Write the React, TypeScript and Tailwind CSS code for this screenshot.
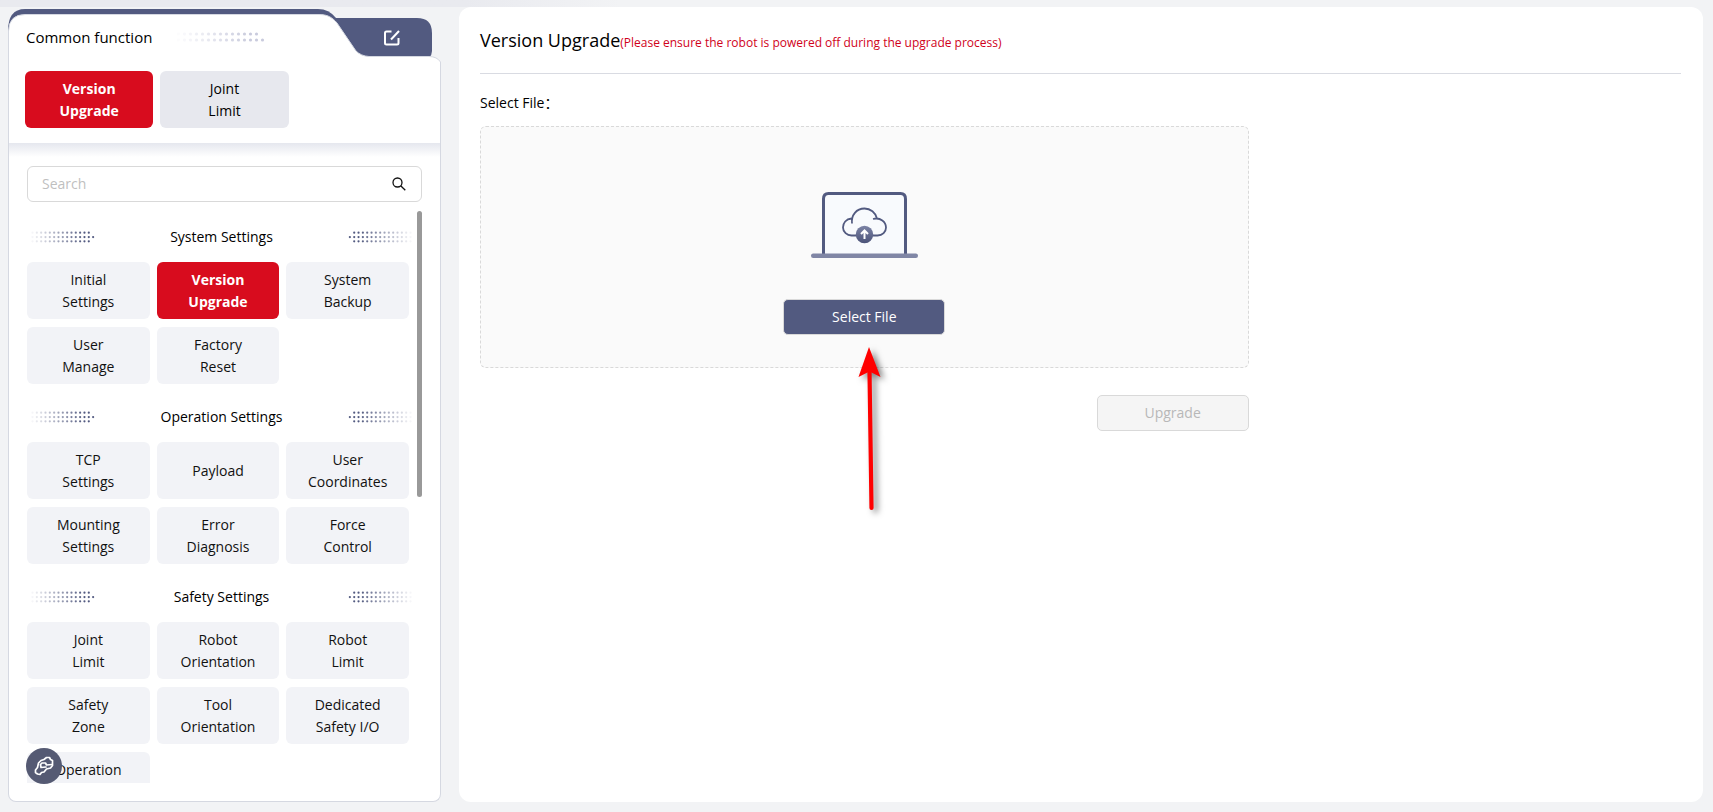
import React, { useState } from 'react';
import clsx from 'clsx';

type Section = {
  title: string;
  items: string[][];
};

const commonItems = [['Version', 'Upgrade'], ['Joint', 'Limit']];

const sections: Section[] = [
  {
    title: 'System Settings',
    items: [['Initial', 'Settings'], ['Version', 'Upgrade'], ['System', 'Backup'], ['User', 'Manage'], ['Factory', 'Reset']],
  },
  {
    title: 'Operation Settings',
    items: [['TCP', 'Settings'], ['Payload'], ['User', 'Coordinates'], ['Mounting', 'Settings'], ['Error', 'Diagnosis'], ['Force', 'Control']],
  },
  {
    title: 'Safety Settings',
    items: [
      ['Joint', 'Limit'],
      ['Robot', 'Orientation'],
      ['Robot', 'Limit'],
      ['Safety', 'Zone'],
      ['Tool', 'Orientation'],
      ['Dedicated', 'Safety I/O'],
      ['Operation', 'Mode'],
    ],
  },
];

const SectionDots = ({ flip = false }: { flip?: boolean }) => (
  <svg width="64" height="14" viewBox="0 0 64 14" className={flip ? '-scale-x-100' : ''} aria-hidden="true">
    {[0, 1, 2].map((row) =>
      Array.from({ length: row === 1 ? 15 : 14 }, (_, i) => (
        <circle key={`${row}-${i}`} cx={1.5 + i * 4.33} cy={2.7 + row * 4.33} r="1.1" fill="#525a80" opacity={Math.min(1, 0.06 + i * 0.08)} />
      ))
    )}
  </svg>
);

const HeaderDots = () => (
  <svg width="90" height="12" viewBox="0 0 90 12" aria-hidden="true">
    {[0, 1].map((row) =>
      Array.from({ length: 14 + row }, (_, i) => (
        <circle key={`${row}-${i}`} cx={2.5 + i * 6} cy={3 + row * 6} r="1.6" fill="#c9cbdd" opacity={Math.min(1, 0.05 + i * 0.08)} />
      ))
    )}
  </svg>
);

/* Folder-like header: dark tab behind, white tab in front */
const TabShape = () => (
  <svg className="absolute inset-0" width="433" height="53" viewBox="0 0 433 53" fill="none" aria-hidden="true">
    <path d="M320 9H409Q424 9 424 24V42Q424 46 421 49H340L310 20Z" fill="#525a80" />
    <path d="M0 22Q0 0 17 0H310Q321 0 328 9L340 25H0Z" fill="#525a80" />
    <path
      d="M0.5 53V22Q1 5.5 17 5.5H311C319 5.5 324 8 329 14L348 42Q353 47 361 47.5H421Q429 47.5 432.5 53Z"
      fill="#fff"
    />
    <path
      d="M0.5 53V22Q1 5.5 17 5.5H311C319 5.5 324 8 329 14L348 42Q353 47 361 47.5H421Q429 47.5 432.5 53"
      stroke="#d5d8e1"
    />
  </svg>
);

const FunctionButton = ({ lines, active, tone, onClick }: { lines: string[]; active: boolean; tone: string; onClick: () => void }) => (
  <button
    onClick={onClick}
    className={clsx(
      'flex h-[57px] w-full flex-col items-center justify-center rounded-md text-sm leading-[22px]',
      active ? 'bg-[#d80c1e] font-bold text-white' : tone
    )}
  >
    {lines.map((line) => (
      <span key={line}>{line}</span>
    ))}
  </button>
);

const Sidebar = () => {
  const [current, setCurrent] = useState('Version Upgrade');

  return (
    <aside className="relative mt-0.5 flex w-[433px] shrink-0 flex-col">
      <div className="relative flex h-[53px] shrink-0 items-start">
        <TabShape />
        <h2 className="relative pt-4 pl-[18px] text-[15px] leading-6 font-normal">Common function</h2>
        <div className="relative pt-[22px] pl-6">
          <HeaderDots />
        </div>
        <button aria-label="Edit common functions" className="relative mt-5 mr-10 ml-auto text-white">
          <svg width="18" height="18" viewBox="0 0 18 18" fill="none" stroke="currentColor" strokeWidth="2" aria-hidden="true">
            <path d="M8.5 2.500H3.5Q2 2.500 2 4V14Q2 15.500 3.500 15.500H14Q15.500 15.500 15.500 14V9" />
            <path d="M8 10.500L16 2" />
          </svg>
        </button>
      </div>

      <div className="grid shrink-0 grid-cols-3 gap-[7px] border-x border-[#d5d8e1] bg-white px-4 pt-[9px] pb-[15px]">
        {commonItems.map((lines) => (
          <FunctionButton
            key={lines.join(' ')}
            lines={lines}
            active={current === lines.join(' ')}
            tone="bg-[#e7e8ee] text-black font-medium"
            onClick={() => setCurrent(lines.join(' '))}
          />
        ))}
      </div>

      <div className="flex min-h-0 flex-1 flex-col rounded-b-lg border-x border-b border-[#d5d8e1] bg-white pb-[18px]">
        <div className="h-[14px] shrink-0 bg-linear-to-b from-[#e5e7ee] to-white" />
        <div className="mx-[18px] mt-[9px] flex h-9 shrink-0 items-center rounded-md border border-[#d9d9d9] pr-[15px] pl-[14px]">
          <input
            type="text"
            aria-label="Search functions"
            placeholder="Search"
            className="min-w-0 flex-1 text-sm outline-none placeholder:text-[#bfbfbf]"
          />
          <button aria-label="Search">
            <svg width="14" height="14" viewBox="0 0 14 14" fill="none" stroke="#111" strokeWidth="1.3" aria-hidden="true">
              <circle cx="5.500" cy="5.500" r="4.500" />
              <path d="M8.700 8.700L13.300 13.300" />
            </svg>
          </button>
        </div>

        <div className="mx-[18px] mt-[9px] flex min-h-0 flex-1 justify-between">
          <div className="w-[385px] overflow-x-hidden overflow-y-auto [scrollbar-width:none]">
            {sections.map((section) => (
              <section key={section.title} className="mb-[7px]">
                <div className="flex h-[51px] items-center justify-between pl-1">
                  <SectionDots />
                  <h3 className="text-sm font-normal">{section.title}</h3>
                  <SectionDots flip />
                </div>
                <div className="mr-[3px] grid grid-cols-3 gap-x-[7px] gap-y-2">
                  {section.items.map((lines) => (
                    <FunctionButton
                      key={lines.join(' ')}
                      lines={lines}
                      active={current === lines.join(' ')}
                      tone="bg-[#f2f3f7] text-[#111]"
                      onClick={() => setCurrent(lines.join(' '))}
                    />
                  ))}
                </div>
              </section>
            ))}
          </div>
          <div className="h-1/2 w-[5px] rounded-full bg-[#999]" />
        </div>
      </div>

      <button
        aria-label="Robot"
        className="absolute bottom-[18px] left-[18px] flex size-9 items-center justify-center rounded-full bg-[#555a73] text-white"
      >
        <svg width="20" height="20" viewBox="0 0 20 20" fill="none" stroke="currentColor" strokeWidth="1.700" strokeLinejoin="round" strokeLinecap="round" aria-hidden="true">
          <path d="M1.500 14L3.500 11.500L4.500 7L7 4.500L10 3.500L12.500 1.500H15.500L16.500 3.500L18.500 4.500V9.500L16.500 12L12.500 13L10 16L7.500 16.500L6 18.500L3.500 18L1.500 16.500Z" />
          <path d="M18 8.500L12.500 9L11.500 7H8L6.500 8.500L7 11.500L12 11" />
        </svg>
      </button>
    </aside>
  );
};

const LaptopUpload = () => (
  <svg width="108" height="68" viewBox="0 0 108 68" fill="none" aria-hidden="true">
    <defs>
      <linearGradient id="badge" x1="0" y1="0" x2="0" y2="1">
        <stop offset="0" stopColor="#7c83a5" />
        <stop offset="1" stopColor="#4b5379" />
      </linearGradient>
    </defs>
    <path d="M13.500 63V7Q13.500 1.500 18.500 1.500H90.500Q95.500 1.500 95.500 7V63" fill="#f8fafd" stroke="#525a80" strokeWidth="3" />
    <rect x="1" y="61.500" width="107" height="4.500" rx="2.200" fill="#8086a5" />
    <path
      d="M42 31.500C41 23 46.500 16.500 54.500 16.500C60.500 16.500 65.500 20.500 67 26.500M41.500 26.500C36 27 33 31 33 35.500C33 40 37 43.500 41.500 43.500H67.500C72.500 43.500 76 40 76 35.500C76 30 70.500 25 63 27"
      stroke="#525a80"
      strokeWidth="1.800"
    />
    <circle cx="54.500" cy="42.500" r="8.700" fill="url(#badge)" />
    <path d="M54.500 47V39M51 42L54.500 38.500L58 42" stroke="#fff" strokeWidth="2" />
  </svg>
);

const PointerArrow = () => (
  <svg
    className="pointer-events-none absolute top-full left-1/2 mt-2 -ml-2 drop-shadow-[4px_3px_3px_rgba(0,0,0,0.5)]"
    width="36"
    height="170"
    viewBox="0 0 36 170"
    aria-hidden="true"
  >
    <path d="M13.500 28L15.500 165" stroke="#f00" strokeWidth="4.200" strokeLinecap="round" />
    <path d="M13 4L24.500 34L13.500 28.500L2.500 34Z" fill="#f00" />
  </svg>
);

const UpgradePanel = () => (
  <main className="min-w-0 flex-1 rounded-xl bg-white pr-[22px] pl-[21px]">
    <header className="flex h-[67px] items-center border-b border-[#d9dbe2] pb-px">
      <div className="flex items-baseline">
        <h1 className="text-lg font-normal">Version Upgrade</h1>
        <span className="text-xs text-[#d0021b]">(Please ensure the robot is powered off during the upgrade process)</span>
      </div>
    </header>

    <p className="mt-[18px] text-sm leading-[22px]">Select File：</p>

    <div className="mt-3 w-[64%]">
      <div className="flex h-[242px] flex-col items-center rounded-md border border-dashed border-[#d9d9d9] bg-[#fafafa] pt-[65px]">
        <LaptopUpload />
        <div className="relative mt-[39px]">
          <button className="h-9 w-[162px] rounded-[5px] border border-[#d9d9d9] bg-[#525a80] text-sm text-white">Select File</button>
          <PointerArrow />
        </div>
      </div>
      <div className="mt-[27px] flex justify-end">
        <button disabled className="h-9 w-[152px] rounded-[5px] border border-[#d9d9d9] bg-[#f5f5f5] text-sm text-[#b8b8b8]">
          Upgrade
        </button>
      </div>
    </div>
  </main>
);

export default function App() {
  return (
    <div className="flex h-screen flex-col bg-[#f2f3f5] font-['Open_Sans','Noto_Sans_CJK_SC',sans-serif] text-black">
      <div className="h-[7px] w-[620px] shrink-0 bg-linear-to-r from-[#e9eaef] from-75% to-[#f2f3f5]" />
      <div className="flex min-h-0 flex-1 gap-[18px] pr-2.5 pb-2.5 pl-2">
        <Sidebar />
        <UpgradePanel />
      </div>
    </div>
  );
}
